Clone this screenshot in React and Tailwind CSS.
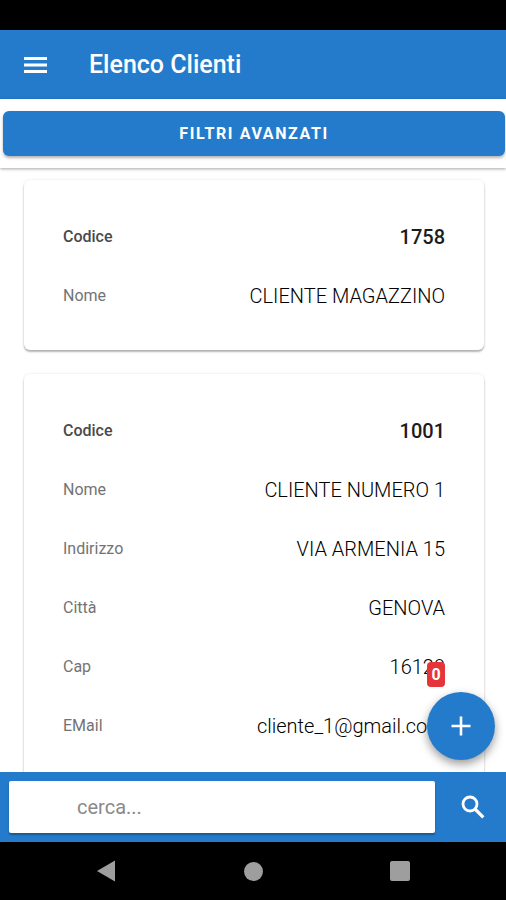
import React, { useState } from 'react';

const clienti = [
  {
    codice: '1758',
    campi: [{ label: 'Nome', value: 'CLIENTE MAGAZZINO' }],
  },
  {
    codice: '1001',
    campi: [
      { label: 'Nome', value: 'CLIENTE NUMERO 1' },
      { label: 'Indirizzo', value: 'VIA ARMENIA 15' },
      { label: 'Città', value: 'GENOVA' },
      { label: 'Cap', value: '16129' },
      { label: 'EMail', value: 'cliente_1@gmail.com' },
    ],
  },
];

function Header() {
  return (
    <header className="flex h-[69px] shrink-0 items-center bg-[#257bcb] pl-6 text-white">
      <button type="button" aria-label="Menu" className="cursor-pointer">
        <svg viewBox="0 0 23 16" className="h-4 w-[23px] fill-current">
          <path d="M0 0h23v3H0zM0 6.5h23v3H0zM0 13h23v3H0z" />
        </svg>
      </button>
      <h1 className="ml-[42px] text-[25px] font-medium">Elenco Clienti</h1>
    </header>
  );
}

function ClienteCard({ cliente }) {
  return (
    <article className="rounded-md bg-white px-[39px] pt-[27px] pb-[25px] shadow-[0_2px_2px_rgba(0,0,0,0.28),0_0_3px_rgba(0,0,0,0.1)]">
      <dl>
        <div className="flex h-[59px] items-center justify-between">
          <dt className="text-base font-medium text-[#4a4a4a]">Codice</dt>
          <dd className="text-xl font-medium text-[#1c1c1c]">{cliente.codice}</dd>
        </div>
        {cliente.campi.map((campo) => (
          <div key={campo.label} className="flex h-[59px] items-center justify-between">
            <dt className="text-base text-[#737373]">{campo.label}</dt>
            <dd className="text-xl font-light text-black">{campo.value}</dd>
          </div>
        ))}
      </dl>
    </article>
  );
}

function SearchBar() {
  const [query, setQuery] = useState('');

  return (
    <form
      className="flex h-[70px] shrink-0 items-center bg-[#257bcb] pl-[9px]"
      onSubmit={(e) => e.preventDefault()}
    >
      <input
        type="text"
        aria-label="cerca"
        placeholder="cerca..."
        value={query}
        onChange={(e) => setQuery(e.target.value)}
        className="h-[52px] min-w-0 flex-1 rounded-xs bg-white pr-4 pl-17 text-xl text-[#222222] shadow-[0_2px_2px_rgba(0,0,0,0.3)] outline-none placeholder:text-[#8a8a8a]"
      />
      <button type="submit" aria-label="Cerca" className="flex w-[71px] cursor-pointer justify-center pl-1 text-white">
        <svg viewBox="0 0 24 24" className="size-6 fill-none stroke-current">
          <circle cx="9" cy="9" r="7" strokeWidth="2.8" />
          <path d="M14 14l8.3 8.3" strokeWidth="3.2" />
        </svg>
      </button>
    </form>
  );
}

function AndroidNav() {
  return (
    <nav className="flex h-[58px] shrink-0 items-center justify-around bg-black px-[33px]">
      <button type="button" aria-label="Indietro">
        <svg viewBox="0 0 20 22" className="h-[22px] w-5 fill-[#9e9e9e]">
          <path d="M18 0.5v21L0 11z" />
        </svg>
      </button>
      <button type="button" aria-label="Home" className="size-[19px] rounded-full bg-[#9e9e9e]" />
      <button type="button" aria-label="Recenti" className="size-5 rounded-xs bg-[#9e9e9e]" />
    </nav>
  );
}

export default function App() {
  return (
    <div className="flex h-screen flex-col bg-white font-[Roboto,sans-serif]">
      <div className="h-[30px] shrink-0 bg-black" />
      <Header />
      <div className="z-10 shrink-0 bg-white pt-3 pr-px pb-3 pl-[3px] shadow-[0_1px_3px_rgba(0,0,0,0.35)]">
        <button
          type="button"
          className="h-[45px] w-full cursor-pointer rounded-md bg-[#257bcb] text-base font-bold tracking-widest text-white shadow-[0_2px_3px_rgba(0,0,0,0.3)]"
        >
          FILTRI AVANZATI
        </button>
      </div>
      <div className="relative min-h-0 flex-1">
        <main className="flex h-full flex-col gap-6 overflow-hidden pt-3 pr-[22px] pl-6">
          {clienti.map((cliente) => (
            <ClienteCard key={cliente.codice} cliente={cliente} />
          ))}
        </main>
        {/* floating action button */}
        <div className="absolute right-[11px] bottom-3">
          <button
            type="button"
            aria-label="Aggiungi cliente"
            className="flex size-17 cursor-pointer items-center justify-center rounded-full bg-[#257bcb] text-white shadow-[0_4px_10px_rgba(0,0,0,0.4)]"
          >
            <svg viewBox="0 0 20 20" className="size-5 fill-none stroke-current stroke-[2.6]">
              <path d="M10 0.5v19M0.5 10h19" />
            </svg>
          </button>
          <span className="absolute -top-[30px] left-0 flex h-[25px] w-[18px] items-center justify-center rounded-sm bg-[#e5353b] text-base font-bold text-white">
            0
          </span>
        </div>
      </div>
      <SearchBar />
      <AndroidNav />
    </div>
  );
}
